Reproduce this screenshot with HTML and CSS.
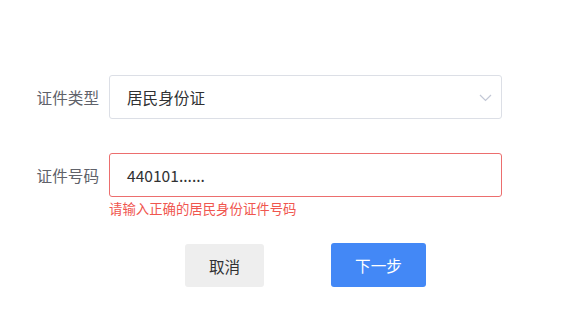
FILE: index.html
```html
<html>
<head>
    <link rel="stylesheet" href="styles.css">
</head>
<body>

<div class="form">

    <div class="row">
        <div class="label">证件类型</div>
        <div class="field">
            <div class="input select">
                <span>居民身份证</span>
                <svg class="arrow" width="13" height="8" viewBox="0 0 13 8">
                    <polyline points="1,1 6.5,6.5 12,1" fill="none" stroke="#c3c8d6" stroke-width="1.2"/>
                </svg>
            </div>
        </div>
    </div>

    <div class="row second">
        <div class="label">证件号码</div>
        <div class="field">
            <div class="input error">
                <span>440101......</span>
            </div>
            <div class="tip">请输入正确的居民身份证件号码</div>
        </div>
    </div>

    <div class="buttons">
        <button class="btn cancel">取消</button>
        <button class="btn next">下一步</button>
    </div>

</div>

</body>
</html>
```

FILE: styles.css
```css
body{
    margin: 0;
    background-color: #fff;
    font-family: "Noto Sans CJK SC", "Microsoft YaHei", sans-serif;
}
.form{
    padding-top: 75px;
}
.row{
    display: flex;
    align-items: flex-start;
}
.row.second{
    margin-top: 34px;
}
.label{
    width: 99px;
    height: 44px;
    line-height: 44px;
    text-align: right;
    margin-right: 10px;
    font-size: 15.6px;
    color: #60626a;
}
.field{
    width: 393px;
}
.input{
    display: flex;
    align-items: center;
    justify-content: space-between;
    height: 44px;
    box-sizing: border-box;
    border: 1px solid #dcdfe6;
    border-radius: 3px;
    padding: 0 9px 0 17px;
    font-size: 15.6px;
    color: #303133;
}
.input.error{
    border-color: #ec6e6e;
}
.arrow{
    margin-top: 2px;
}
.tip{
    margin-top: 2px;
    font-size: 13.4px;
    line-height: 18px;
    color: #f0564f;
}
.buttons{
    display: flex;
    justify-content: center;
    gap: 67px;
    margin-left: 109px;
    width: 393px;
    margin-top: 26px;
}
.btn{
    height: 44px;
    border: none;
    border-radius: 3px;
    font-family: inherit;
    font-size: 15.6px;
}
.cancel{
    width: 79px;
    background-color: #eeeeee;
    color: #303133;
    margin-top: 1px;
    height: 43px;
}
.next{
    width: 95px;
    background-color: #4388f6;
    color: #fff;
}
```
